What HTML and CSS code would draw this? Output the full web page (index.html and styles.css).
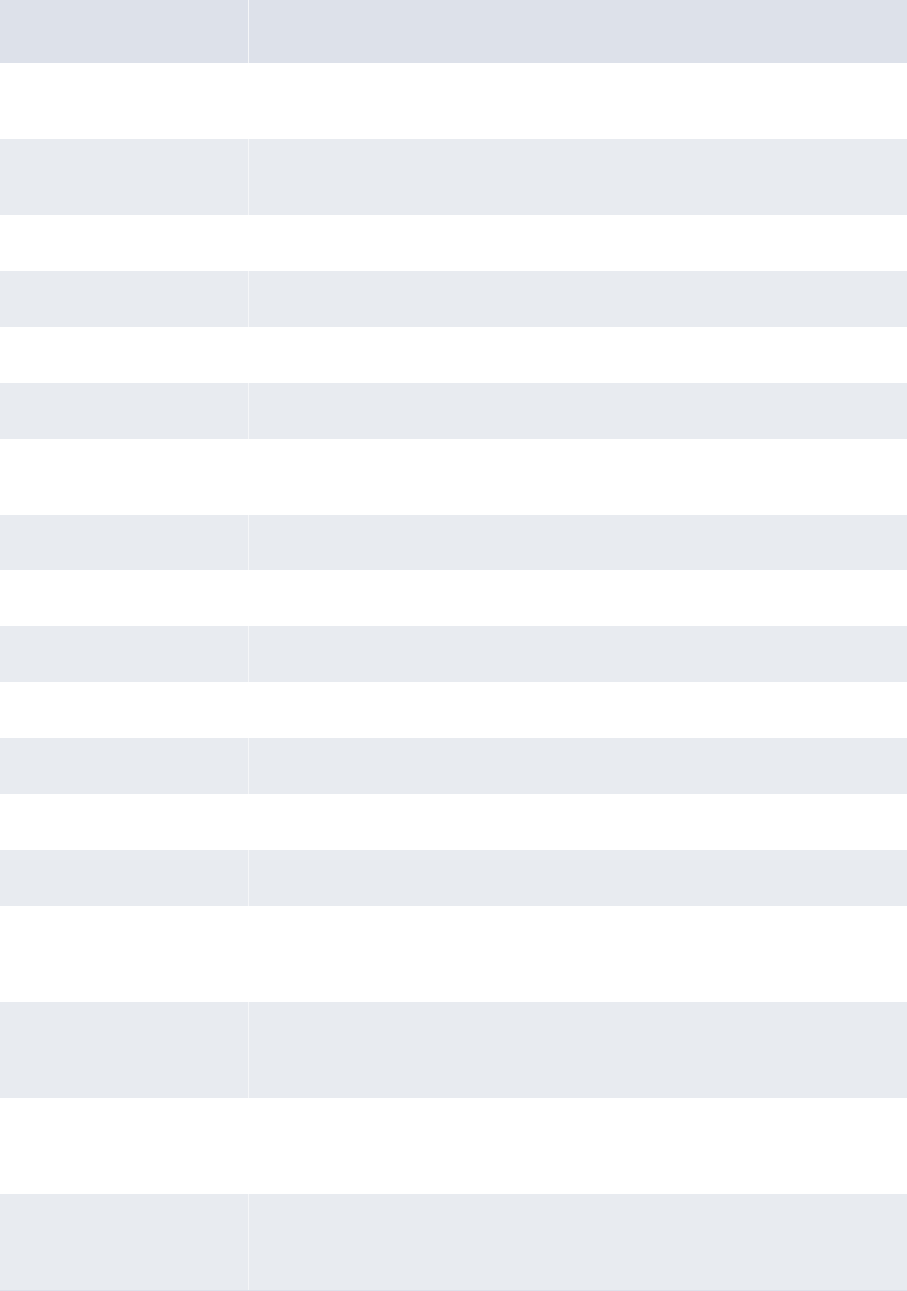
FILE: index.html
```html
<!DOCTYPE html>
<html lang="en">
<head>
  <meta charset="UTF-8" />
  <meta name="viewport" content="width=device-width, initial-scale=1.0"/>
  <title>Table</title>
<link rel="stylesheet" href="styles.css">
</head>
<body>

  <table class="grid">
    <thead>
      <tr class="head-row">
        <th class="col-key"></th>
        <th class="col-val"></th>
      </tr>
    </thead>
    <tbody>
      <tr class="lines-2"><td class="col-key"></td><td class="col-val"></td></tr>
      <tr class="lines-2"><td class="col-key"></td><td class="col-val"></td></tr>
      <tr class="lines-1"><td class="col-key"></td><td class="col-val"></td></tr>
      <tr class="lines-1"><td class="col-key"></td><td class="col-val"></td></tr>
      <tr class="lines-1"><td class="col-key"></td><td class="col-val"></td></tr>
      <tr class="lines-1"><td class="col-key"></td><td class="col-val"></td></tr>
      <tr class="lines-2"><td class="col-key"></td><td class="col-val"></td></tr>
      <tr class="lines-1"><td class="col-key"></td><td class="col-val"></td></tr>
      <tr class="lines-1"><td class="col-key"></td><td class="col-val"></td></tr>
      <tr class="lines-1"><td class="col-key"></td><td class="col-val"></td></tr>
      <tr class="lines-1"><td class="col-key"></td><td class="col-val"></td></tr>
      <tr class="lines-1"><td class="col-key"></td><td class="col-val"></td></tr>
      <tr class="lines-1"><td class="col-key"></td><td class="col-val"></td></tr>
      <tr class="lines-1"><td class="col-key"></td><td class="col-val"></td></tr>
      <tr class="lines-3"><td class="col-key"></td><td class="col-val"></td></tr>
      <tr class="lines-3"><td class="col-key"></td><td class="col-val"></td></tr>
      <tr class="lines-3"><td class="col-key"></td><td class="col-val"></td></tr>
      <tr class="lines-3"><td class="col-key"></td><td class="col-val"></td></tr>
    </tbody>
  </table>

</body>
</html>
```

FILE: styles.css
```css
:root {
  --head-bg: #dde1ea;
  --stripe: #e8ebf0;
  --divider: #f5f6f8;
}

* {
  box-sizing: border-box;
  margin: 0;
  padding: 0;
}

body, html {
  background: #fff;
  font-family: 'Liberation Sans', Arial, sans-serif;
  font-size: 14px;
  color: #1f2937;
}

.grid {
  width: 100%;
  border-collapse: separate;
  border-spacing: 0;
  table-layout: fixed;
  border-bottom: 1px solid var(--head-bg);
}

.grid th,
.grid td {
  padding: 0;
  vertical-align: top;
}

.grid .col-key {
  width: 248px;
}

.grid .col-val {
  border-left: 1px solid transparent;
}

.head-row {
  height: 63px;
  background: var(--head-bg);
}

.head-row .col-val,
.grid tbody tr:nth-child(even) .col-val {
  border-left-color: var(--divider);
}

.grid tbody tr:nth-child(even) {
  background: var(--stripe);
}

.lines-1 {
  height: 55.9px;
}

.lines-2 {
  height: 76px;
}

.lines-3 {
  height: 96px;
}
```
